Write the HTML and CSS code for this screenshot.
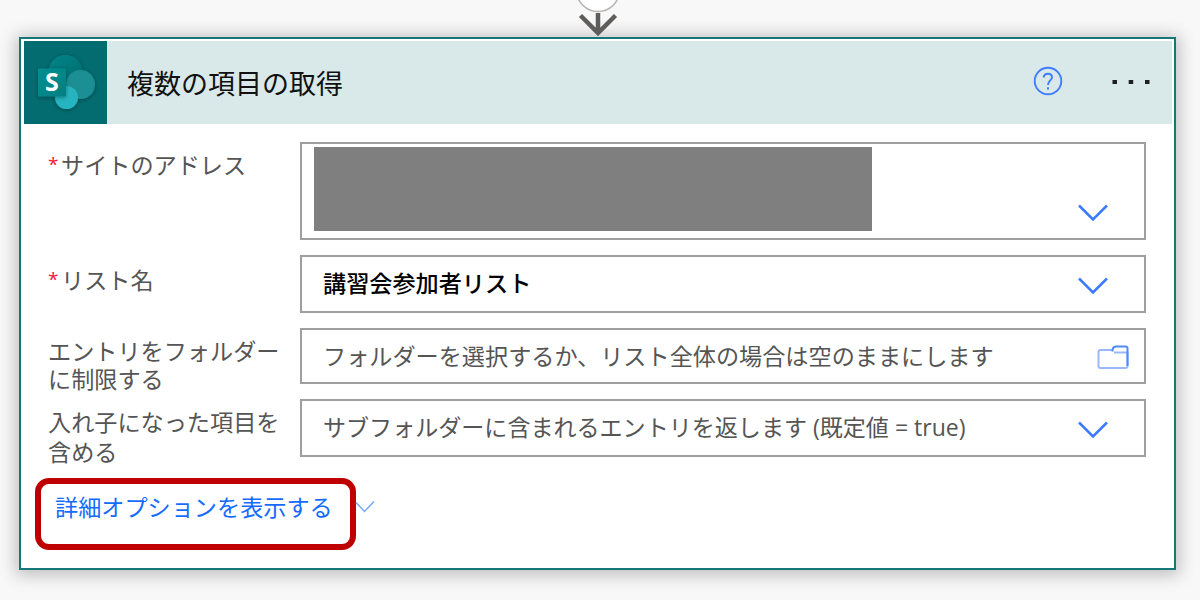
FILE: index.html
```
<!DOCTYPE html>
<html lang="ja">
<head>
<meta charset="utf-8">
<title>複数の項目の取得</title>
<link rel="stylesheet" href="styles.css">
</head>
<body>
<div class="connector">
  <svg width="60" height="37" viewBox="0 0 60 37">
    <circle cx="30" cy="-10" r="21.500" fill="#fff" stroke="#b5b3b1" stroke-width="1.500"/>
    <path d="M30 13V34M12.500 15.500L30 33L47.500 15.500" fill="none" stroke="#5f5d5c" stroke-width="4.500"/>
  </svg>
</div>
<main class="card">
  <header class="card-header">
    <svg class="logo" width="83" height="83" viewBox="0 0 83 83">
      <defs>
        <linearGradient id="top" x1="0" y1="0" x2="1" y2="1"><stop offset="0" stop-color="#07868a"/><stop offset="1" stop-color="#03696c"/></linearGradient>
        <linearGradient id="tile" x1="0" y1="0" x2="1" y2="1"><stop offset="0" stop-color="#058f92"/><stop offset="1" stop-color="#037f81"/></linearGradient>
        <filter id="shade" x="-30%" y="-30%" width="160%" height="160%"><feDropShadow dx="0" dy="1" stdDeviation="2" flood-opacity=".35"/></filter>
      </defs>
      <rect width="83" height="83" fill="#036c70"/>
      <g filter="url(#shade)">
        <circle cx="41.500" cy="31" r="17" fill="url(#top)"/>
        <circle cx="56.500" cy="43.500" r="14.500" fill="#1d8f94"/>
        <circle cx="42.500" cy="56.500" r="11.500" fill="#28b5c0"/>
      </g>
      <rect x="14" y="27.500" width="28" height="28" rx="1" fill="url(#tile)" filter="url(#shade)"/>
      <text x="28" y="50" text-anchor="middle" class="logo-letter">S</text>
    </svg>
    <h1 class="title">複数の項目の取得</h1>
    <svg class="help" width="30" height="30" viewBox="0 0 30 30" fill="none" stroke="#3f7dff" stroke-width="1.900">
      <circle cx="15" cy="15" r="13.300"/>
      <path d="M10.800 11.500C10.800 9 12.500 7.700 15 7.700C17.500 7.700 19 9.200 19 11.300C19 14.500 15 14.500 15 19M15 21.300V23.500"/>
    </svg>
    <svg class="more" width="40" height="6" viewBox="0 0 40 6" fill="#1f1d1d">
      <rect x="1.500" y="1" width="4.500" height="4"/><rect x="17.700" y="1" width="4.500" height="4"/><rect x="34" y="1" width="4.500" height="4"/>
    </svg>
  </header>
  <section class="form">
    <div class="label"><span class="required">*</span>サイトのアドレス</div>
    <div class="field field-address">
      <span class="redacted"></span>
      <svg class="chevron" width="32" height="18" viewBox="0 0 32 18"><path d="M2 1.500L16 15.500L30 1.500"/></svg>
    </div>
    <div class="label label-list"><span class="required">*</span>リスト名</div>
    <div class="field">
      <span class="value">講習会参加者リスト</span>
      <svg class="chevron" width="32" height="18" viewBox="0 0 32 18"><path d="M2 1.500L16 15.500L30 1.500"/></svg>
    </div>
    <div class="label label-folder">エントリをフォルダー<br>に制限する</div>
    <div class="field">
      <span class="placeholder">フォルダーを選択するか、リスト全体の場合は空のままにします</span>
      <svg class="folder" width="32" height="25" viewBox="0 0 32 25" fill="none" stroke-width="2">
        <path d="M15.500 5H3.500Q1.500 5 1.500 7V21Q1.500 23 3.500 23H28.500Q30.500 23 30.500 21V7.500H17" stroke="#9bb8ff"/>
        <path d="M15.500 6.500V5Q16 1.500 19 1.500H28.500Q30.500 1.500 30.500 3.500V21" stroke="#4f8bff"/>
      </svg>
    </div>
    <div class="label">入れ子になった項目を<br>含める</div>
    <div class="field">
      <span class="placeholder nested-text">サブフォルダーに含まれるエントリを返します (既定値 = true)</span>
      <svg class="chevron" width="32" height="18" viewBox="0 0 32 18"><path d="M2 1.500L16 15.500L30 1.500"/></svg>
    </div>
  </section>
  <footer class="footer">
    <a class="options">詳細オプションを表示する</a>
    <svg class="small-chevron" width="20" height="14" viewBox="0 0 20 14"><path d="M1 2.500L9.500 11.500L19 1.500"/></svg>
  </footer>
</main>
</body>
</html>
```
FILE: styles.css
```
* { box-sizing: border-box; }
body {
  margin: 0;
  height: 600px;
  overflow: hidden;
  background: #f8f8f8;
  font-family: "Open Sans", "Noto Sans CJK JP", sans-serif;
  font-size: 23.15px;
  color: #555;
}
svg { display: block; flex: none; }
.connector {
  position: relative;
  z-index: 1;
  height: 37px;
  padding-left: 568px;
}
.card {
  width: 1157px;
  height: 533px;
  margin-left: 19px;
  padding: 2px;
  border: 2px solid #167779;
  background: #fff;
  box-shadow: 0 2px 16px 3px rgba(0, 0, 0, .24);
}
.card-header {
  display: flex;
  align-items: center;
  height: 83px;
  margin-left: 1px;
  background: #d9e8e8;
}
.logo-letter {
  font: 700 25px "Open Sans", sans-serif;
  fill: #fff;
}
.title {
  flex: 1;
  margin: 0 0 0 20px;
  padding-top: 3px;
  font-size: 27px;
  font-weight: 400;
  line-height: 40px;
  color: #111;
}
.help { margin: 0 48px 4px 0; }
.more { margin: 0 21px 2px 0; }
.form {
  display: grid;
  grid-template-columns: 252px 846px;
  grid-template-rows: 98px 58px 56px 58px;
  row-gap: 15px;
  padding: 18px 0 0 25px;
}
.label {
  padding-top: 8px;
  line-height: 30px;
  white-space: nowrap;
}
.label-list { padding-top: 10px; }
.label-folder { padding-top: 9px; line-height: 28px; }
.required {
  display: inline-block;
  width: 13px;
  color: #f0183c;
  font-size: 19px;
  line-height: 20px;
  vertical-align: 3px;
}
.field {
  display: flex;
  align-items: center;
  justify-content: space-between;
  padding: 0 35px 0 21px;
  border: 2px solid #9f9f9f;
  white-space: nowrap;
}
.field .chevron { margin-top: 4px; }
.field-address {
  align-items: flex-start;
  padding-left: 12px;
}
.field-address .chevron { margin-top: 60px; }
.redacted {
  width: 558px;
  height: 84px;
  margin-top: 3px;
  background: #7f7f7f;
}
.value {
  padding-bottom: 4px;
  color: #000;
  font-weight: 500;
}
.placeholder { padding-bottom: 3px; }
.nested-text {
  padding-bottom: 5px;
  font-size: 23.06px;
}
.chevron {
  fill: none;
  stroke: #3c7bff;
  stroke-width: 2.5;
}
.folder { margin: 2px -20px 0 0; }
.footer {
  display: flex;
  align-items: flex-start;
  padding: 21px 0 0 12px;
}
.options {
  width: 321px;
  height: 72px;
  padding: 8px 0 0 14px;
  border: 6px solid #be0000;
  border-radius: 14px;
  line-height: 30px;
  white-space: nowrap;
  color: #146cff;
}
.small-chevron {
  margin: 22px 0 0 -1px;
  fill: none;
  stroke: #78aaf5;
  stroke-width: 1.5;
}
```
